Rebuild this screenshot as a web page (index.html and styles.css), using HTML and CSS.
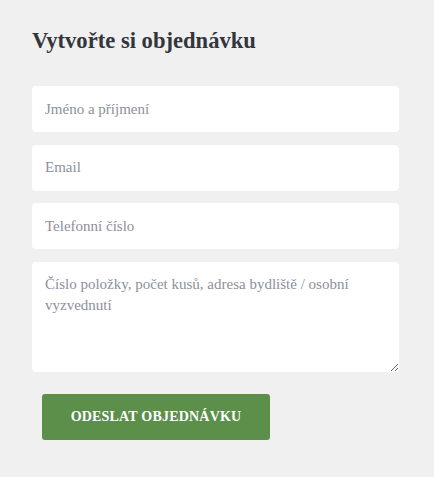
FILE: index.html
```html
<!DOCTYPE html>
<html lang="cs">
<head>
    <meta charset="UTF-8">
    <meta name="viewport" content="width=device-width, initial-scale=1.0">
    <title>Objednávka</title>
    <link rel="stylesheet" href="styles.css">
</head>
<body>
    <section class="order">
        <h2 class="order-title">Vytvořte si objednávku</h2>
        <form class="order-form">
            <input type="text" name="name" placeholder="Jméno a příjmení">
            <input type="email" name="email" placeholder="Email">
            <input type="tel" name="phone" placeholder="Telefonní číslo">
            <textarea name="message" placeholder="Číslo položky, počet kusů, adresa bydliště / osobní vyzvednutí"></textarea>
            <button type="submit" class="order-submit">Odeslat objednávku</button>
        </form>
    </section>
</body>
</html>
```

FILE: styles.css
```css
body {
    margin: 0;
    background-color: #f0f0f0;
    font-family: "Liberation Serif", "DejaVu Serif", serif;
    color: #2f3039;
}
.order {
    padding: 27px 35px 0 32px;
}
.order-title {
    margin: 0 0 31px;
    font-size: 22.6px;
    font-weight: bold;
    line-height: 28px;
    color: #33353d;
}
.order-form {
    display: flex;
    flex-direction: column;
    gap: 12.5px;
}
.order-form input,
.order-form textarea {
    box-sizing: border-box;
    width: 100%;
    border: none;
    border-radius: 4px;
    background: #fff;
    font-family: "Liberation Serif", "DejaVu Serif", serif;
    font-size: 15px;
    color: #333;
    padding: 0 13px;
    margin: 0;
    outline: none;
}
.order-form input {
    height: 46px;
}
.order-form textarea {
    height: 110px;
    padding-top: 12px;
    line-height: 21px;
    resize: vertical;
}
.order-form input::placeholder,
.order-form textarea::placeholder {
    font-family: "Liberation Serif", "DejaVu Serif", serif;
    color: #8c909b;
    opacity: 1;
}
.order-submit {
    align-self: flex-start;
    margin: 10px 0 0 10px;
    width: 228px;
    height: 46px;
    border: none;
    border-radius: 3px;
    background-color: #5b8f4a;
    color: #fff;
    font-family: "Liberation Serif", "DejaVu Serif", serif;
    font-size: 14px;
    font-weight: bold;
    letter-spacing: 0.2px;
    text-transform: uppercase;
    cursor: pointer;
}
```
